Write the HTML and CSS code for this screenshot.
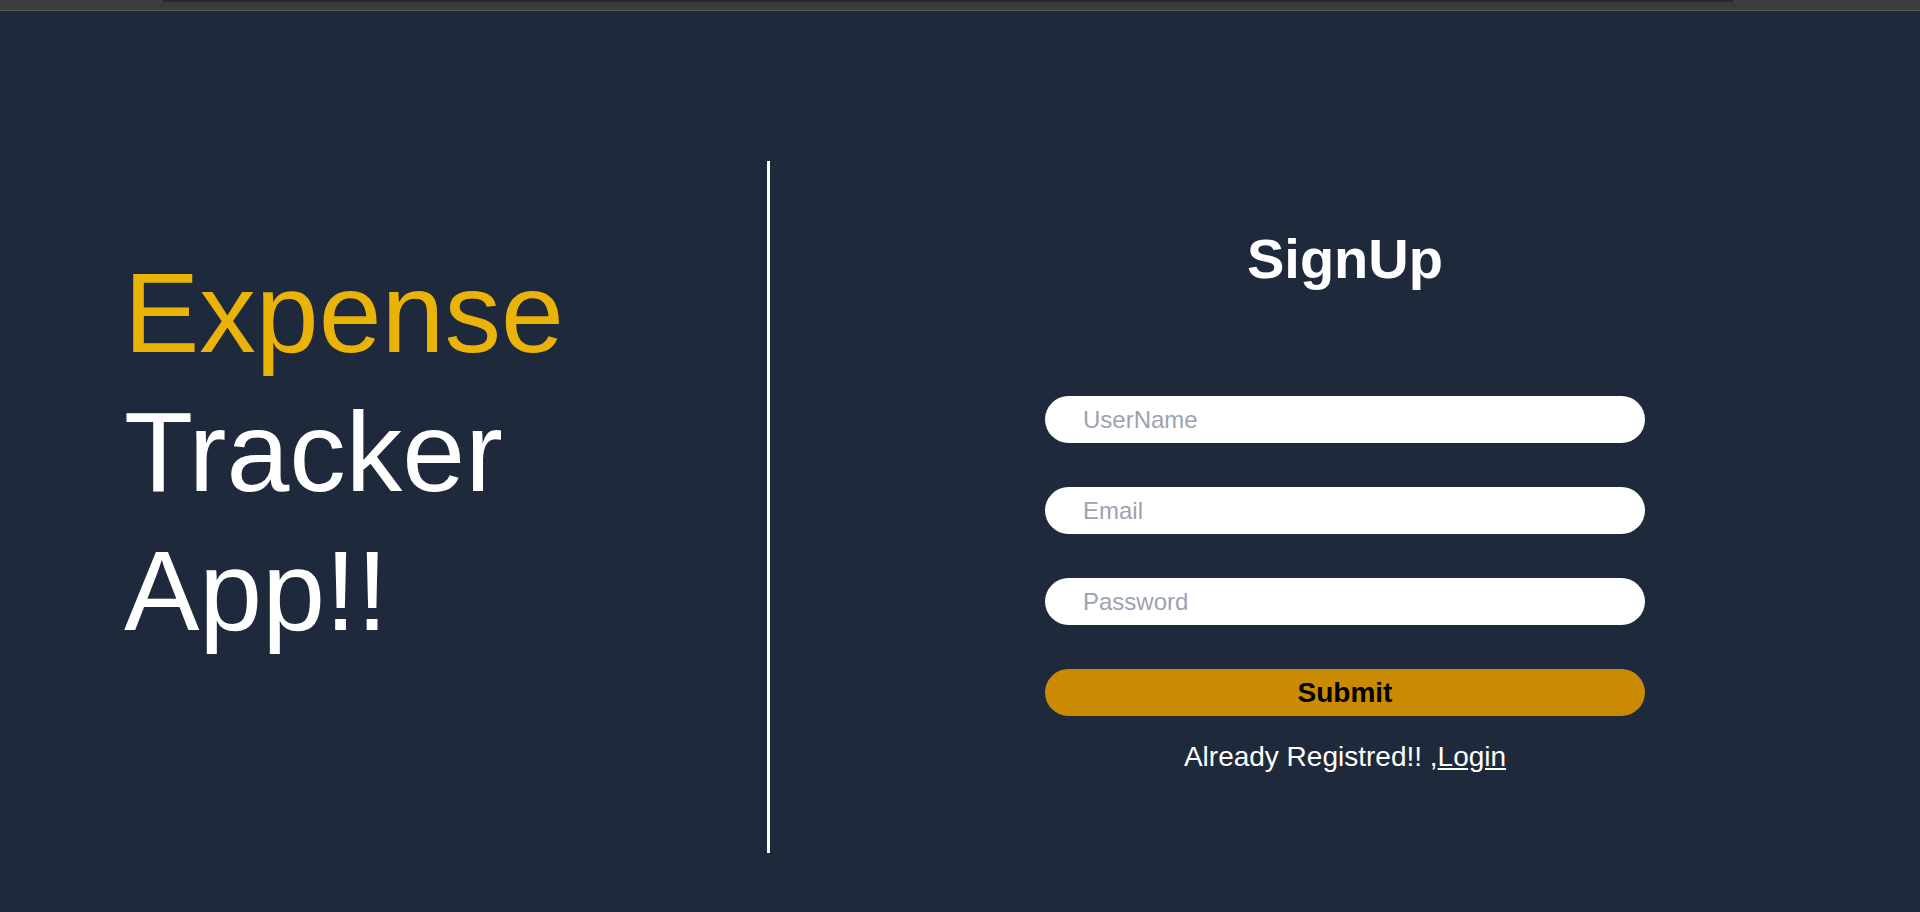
FILE: index.html
```html
<!DOCTYPE html>
<html lang="en">
<head>
<meta charset="utf-8">
<title>Expense Tracker - SignUp</title>
<link rel="stylesheet" href="styles.css">
</head>
<body>
  <div class="chrome"><div class="chrome-bar"></div></div>
  <main class="page">
    <section class="brand">
      <h1 class="brand-title"><span class="accent">Expense</span><br>Tracker<br>App!!</h1>
    </section>
    <section class="auth">
      <h2 class="auth-title">SignUp</h2>
      <form class="auth-form">
        <input class="field" type="text" placeholder="UserName">
        <input class="field" type="email" placeholder="Email">
        <input class="field" type="password" placeholder="Password">
        <button class="submit" type="button">Submit</button>
      </form>
      <p class="switch">Already Registred!! ,<a href="#" class="switch-link">Login</a></p>
    </section>
  </main>
</body>
</html>
```
FILE: styles.css
```css
* { box-sizing: border-box; }
html, body { margin: 0; padding: 0; }
body {
  background: #1e293b;
  font-family: "Liberation Sans", Arial, sans-serif;
  height: 912px;
  overflow: hidden;
}
.chrome {
  height: 11px;
  background: #3c3c3c;
  border-bottom: 1px solid #565656;
  padding: 0 187px 0 163px;
}
.chrome-bar {
  height: 2px;
  background: #282828;
}
.page {
  display: flex;
  height: 901px;
  padding: 150px 0 59px 0;
}
.brand {
  width: 770px;
  flex: none;
  border-right: 3px solid #ffffff;
  padding: 83px 0 0 124px;
}
.brand-title {
  margin: 0;
  font-weight: 400;
  font-size: 113px;
  line-height: 139px;
  color: #ffffff;
}
.accent { color: #eab308; }
.auth {
  flex: 1;
  display: flex;
  flex-direction: column;
  align-items: center;
  padding-top: 66px;
}
.auth-title {
  margin: 0;
  font-size: 56px;
  line-height: 64px;
  font-weight: 700;
  color: #ffffff;
}
.auth-form {
  margin-top: 105px;
  display: flex;
  flex-direction: column;
  gap: 44px;
  width: 600px;
}
.field {
  width: 600px;
  height: 47px;
  border: none;
  border-radius: 9999px;
  background: #ffffff;
  padding: 0 20px 0 38px;
  font-family: "Liberation Sans", Arial, sans-serif;
  font-size: 24px;
  color: #111827;
  outline: none;
}
.field::placeholder { color: #9ca3af; }
.submit {
  width: 600px;
  height: 47px;
  border: none;
  border-radius: 9999px;
  background: #ca8a04;
  color: #000000;
  font-family: "Liberation Sans", Arial, sans-serif;
  font-weight: 700;
  font-size: 28px;
  padding: 0;
  cursor: pointer;
}
.switch {
  margin: 25px 0 0 0;
  font-size: 28px;
  line-height: 32px;
  color: #ffffff;
}
.switch-link {
  color: #ffffff;
  text-decoration: underline;
}
```
